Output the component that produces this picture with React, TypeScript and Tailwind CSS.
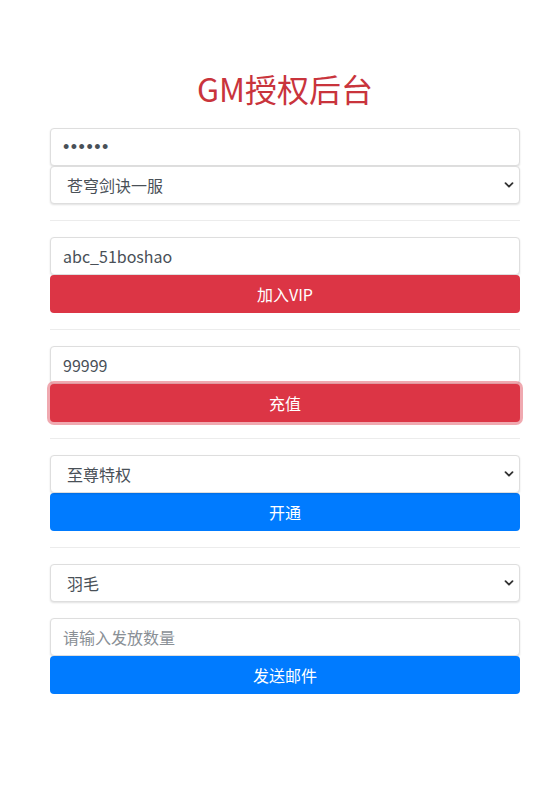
import React from 'react';

const font = { fontFamily: '"Noto Sans CJK SC", "Noto Sans", sans-serif' };

const inputCls =
  'block w-full h-[38px] px-3 text-[16px] text-[#495057] bg-white border border-[#dedede] rounded-[4px] shadow-[0_1px_2px_rgba(0,0,0,0.12)] outline-none placeholder:text-[#8a9096]';

function Chevron() {
  return (
    <svg className="pointer-events-none absolute right-[6px] top-1/2 -translate-y-1/2" width="10" height="10" viewBox="0 0 10 10">
      <path d="M1.5 3.2 L5 6.7 L8.5 3.2" fill="none" stroke="#333" strokeWidth="1.8" strokeLinecap="round" strokeLinejoin="round" />
    </svg>
  );
}

function Select({ value }: { value: string }) {
  return (
    <div className="relative">
      <select className={inputCls + ' appearance-none pl-4'} defaultValue={value}>
        <option>{value}</option>
      </select>
      <Chevron />
    </div>
  );
}

function Button({ label, color }: { label: string; color: 'red' | 'blue' | 'redFocus' }) {
  const cls =
    color === 'blue'
      ? 'bg-[#007bff]'
      : color === 'red'
      ? 'bg-[#dc3545]'
      : 'bg-[#dc3545] shadow-[0_0_0_3px_rgba(225,83,97,0.5)]';
  return (
    <button className={'block w-full h-[38px] rounded-[4px] text-white text-[16px] ' + cls}>{label}</button>
  );
}

function Divider() {
  return <hr className="my-4 border-0 border-t border-[#ececec]" />;
}

export default function App() {
  return (
    <div className="min-h-screen bg-white pl-[50px] pr-[40px]" style={font}>
      <h1 className="pt-[69px] pb-[21px] text-center text-[32px] leading-[38px] text-[#c9343c]">GM授权后台</h1>

      <input
        className={inputCls + ' tracking-[1.5px] text-[18px]'}
        style={{ fontFamily: '"Liberation Sans", Arial, sans-serif' }}
        type="password"
        defaultValue="123456"
      />
      <Select value="苍穹剑诀一服" />

      <Divider />

      <input className={inputCls} type="text" defaultValue="abc_51boshao" />
      <Button label="加入VIP" color="red" />

      <Divider />

      <input className={inputCls} type="text" defaultValue="99999" />
      <Button label="充值" color="redFocus" />

      <Divider />

      <Select value="至尊特权" />
      <Button label="开通" color="blue" />

      <Divider />

      <Select value="羽毛" />
      <div className="h-4" />
      <input className={inputCls} type="text" placeholder="请输入发放数量" />
      <Button label="发送邮件" color="blue" />
    </div>
  );
}
